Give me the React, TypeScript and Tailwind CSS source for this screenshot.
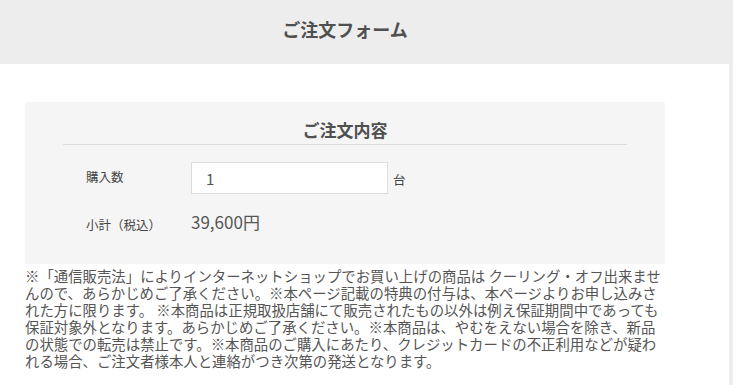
import React from "react";

const lines = [
  "※「通信販売法」によりインターネットショップでお買い上げの商品は クーリング・オフ出来ませ",
  "んので、あらかじめご了承ください。※本ページ記載の特典の付与は、本ページよりお申し込みさ",
  "れた方に限ります。 ※本商品は正規取扱店舗にて販売されたもの以外は例え保証期間中であっても",
  "保証対象外となります。あらかじめご了承ください。※本商品は、やむをえない場合を除き、新品",
  "の状態での転売は禁止です。※本商品のご購入にあたり、クレジットカードの不正利用などが疑わ",
  "れる場合、ご注文者様本人と連絡がつき次第の発送となります。",
];

export default function App() {
  return (
    <div
      className="h-[385px] overflow-hidden w-[733px] bg-[#ededed] text-[#555]"
      style={{ fontFamily: '"Noto Sans CJK JP", "Noto Sans", sans-serif' }}
    >
      <header className="h-[64px] flex items-center">
        <div className="ml-[25px] w-[640px] text-center text-[18px] font-bold leading-[24px] text-[#505050] -mt-[6px]">
          ご注文フォーム
        </div>
      </header>
      <main className="w-[729px] h-[321px] bg-white pt-[38px] pl-[25px]">
        <section className="w-[640px] h-[162px] rounded-[2px] bg-[#f5f5f5]">
          <div className="mx-[38px] pt-[17px] pb-[3px] border-b border-[#dddddd] text-center text-[17px] font-bold leading-[22px] text-[#505050]">
            ご注文内容
          </div>
          <div className="pl-[61px] mt-[17px] flex items-center">
            <div className="w-[105px] text-[12.5px] leading-[18px] text-[#444] -mt-[3px]">購入数</div>
            <input
              type="text"
              defaultValue="1"
              readOnly
              className="w-[197px] h-[32px] bg-white border border-[#dddddd] pl-[14px] text-[15px] text-[#555] outline-none"
            />
            <span className="ml-[5px] mt-[4px] text-[12.5px] text-[#444]">台</span>
          </div>
          <div className="pl-[61px] mt-[16px] flex items-center h-[24px]">
            <div className="w-[105px] text-[12.5px] leading-[18px] text-[#444] mt-[6px]">小計（税込）</div>
            <div className="text-[17px] leading-[24px] text-[#555]">39,600円</div>
          </div>
        </section>
        <div className="mt-[3px] w-[680px] text-[14.4px] leading-[17px] text-[#555]">
          {lines.map((l, i) => (
            <div key={i} className="whitespace-nowrap">
              {l}
            </div>
          ))}
        </div>
      </main>
    </div>
  );
}
